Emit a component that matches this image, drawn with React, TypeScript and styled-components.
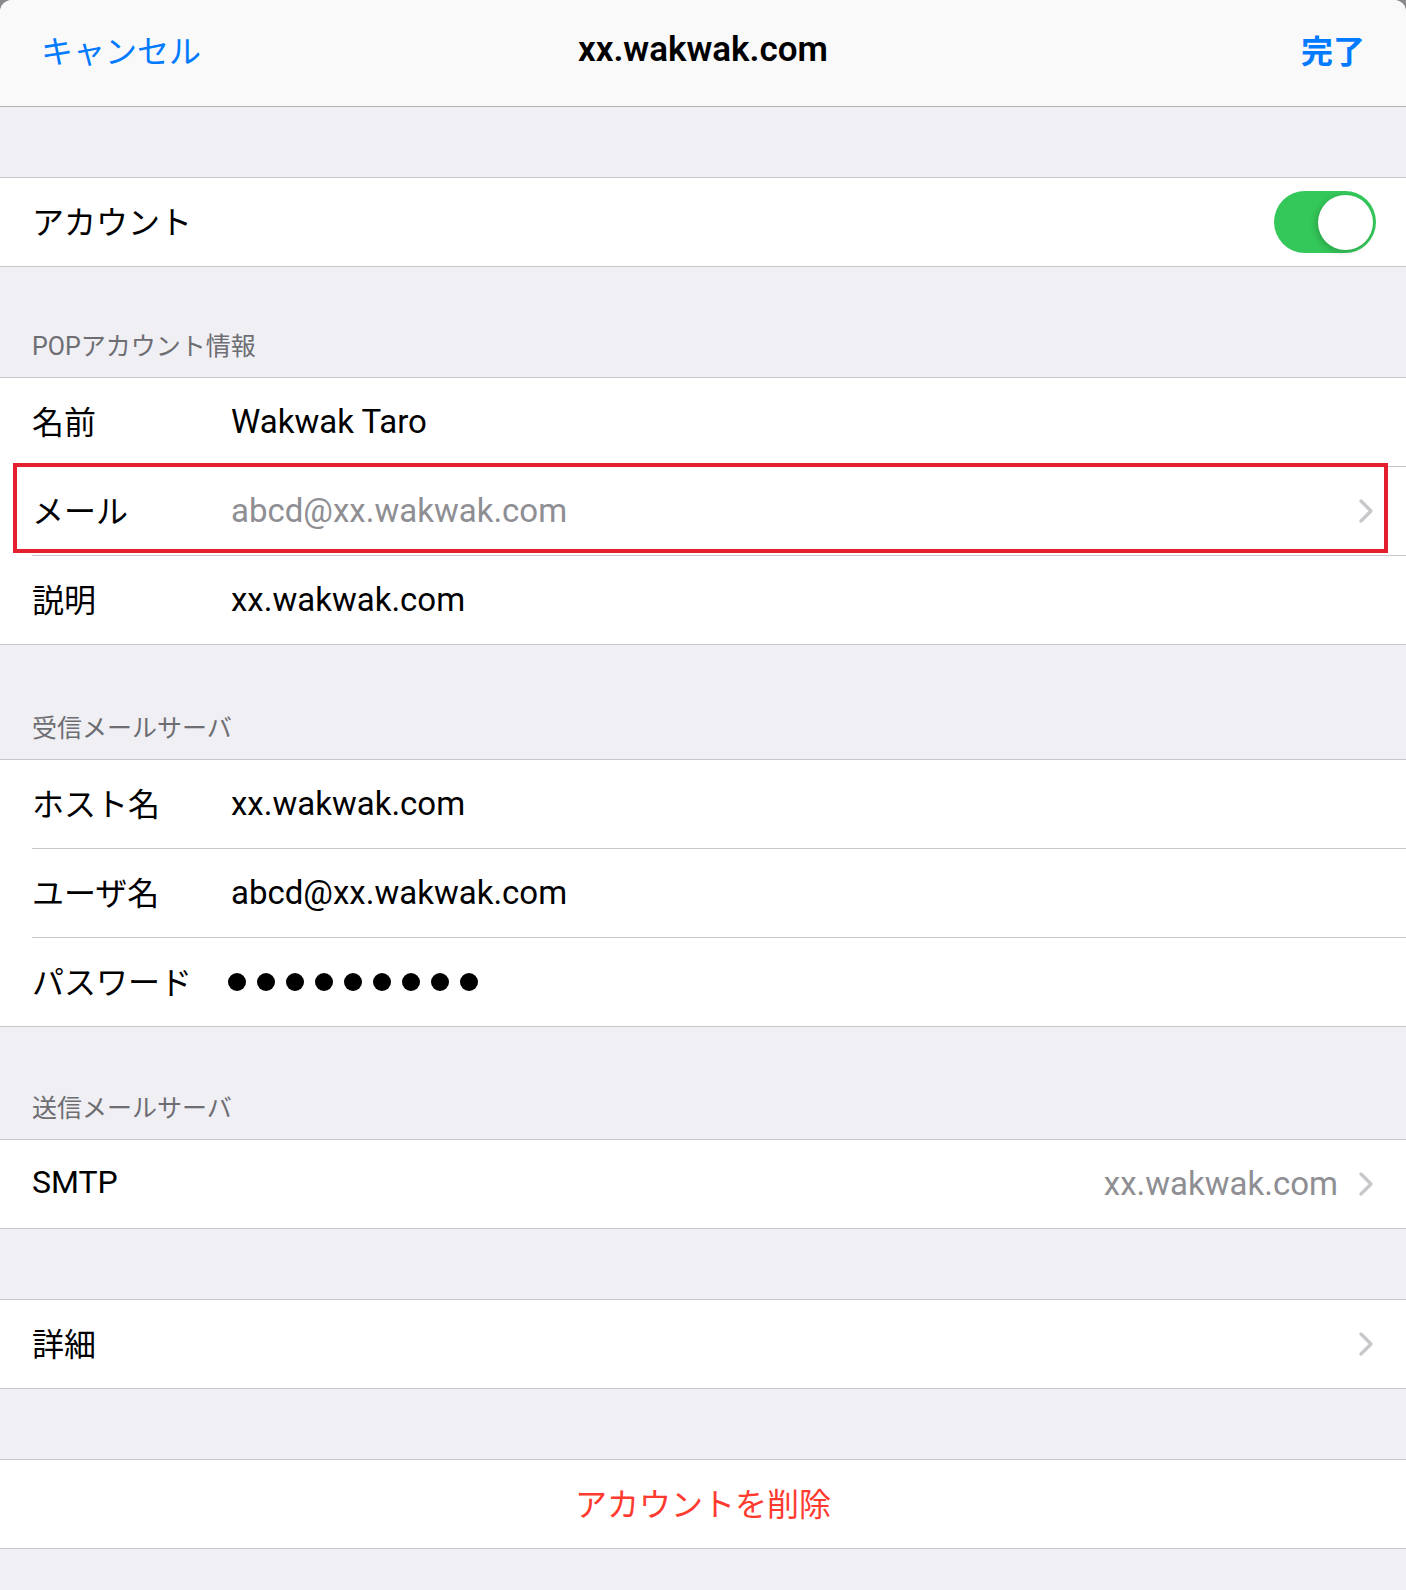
import styled, { createGlobalStyle } from 'styled-components';

const GlobalStyle = createGlobalStyle`
  html, body {
    margin: 0;
    padding: 0;
    background: #8a8a8e;
  }
  body {
    font-family: 'Roboto', 'Noto Sans CJK JP', sans-serif;
    -webkit-font-smoothing: antialiased;
  }
`;

type Field = {
  label: string;
  value?: string;
  muted?: boolean;
  chevron?: boolean;
  highlighted?: boolean;
  secret?: number;
};

const popFields: Field[] = [
  { label: '名前', value: 'Wakwak Taro' },
  { label: 'メール', value: 'abcd@xx.wakwak.com', muted: true, chevron: true, highlighted: true },
  { label: '説明', value: 'xx.wakwak.com' },
];

const incomingFields: Field[] = [
  { label: 'ホスト名', value: 'xx.wakwak.com' },
  { label: 'ユーザ名', value: 'abcd@xx.wakwak.com' },
  { label: 'パスワード', secret: 9 },
];

const Chevron = ({ inline }: { inline?: boolean }) => (
  <ChevronIcon $inline={inline} width="14" height="24" viewBox="0 0 14 24">
    <path d="M2 2 L12 12 L2 22" fill="none" stroke="#c7c7cc" strokeWidth="3.2" strokeLinecap="round" strokeLinejoin="round" />
  </ChevronIcon>
);

const FieldRow = ({ field }: { field: Field }) => (
  <Row>
    <Label>{field.label}</Label>
    {field.secret ? (
      <Dots>
        {Array.from({ length: field.secret }).map((_, i) => (
          <Dot key={i} />
        ))}
      </Dots>
    ) : (
      <Value $muted={field.muted}>{field.value}</Value>
    )}
    {field.chevron && <Chevron />}
    {field.highlighted && <Highlight />}
  </Row>
);

const App = () => {
  return (
    <>
      <GlobalStyle />
      <Sheet>
        <NavBar>
          <NavButton>キャンセル</NavButton>
          <NavTitle>xx.wakwak.com</NavTitle>
          <NavButton $bold $right>
            完了
          </NavButton>
        </NavBar>

        <Spacer />
        <Group>
          <Row>
            <Label>アカウント</Label>
            <Toggle>
              <Knob />
            </Toggle>
          </Row>
        </Group>

        <SectionHeader $height={110}>POPアカウント情報</SectionHeader>
        <Group>
          {popFields.map((f) => (
            <FieldRow key={f.label} field={f} />
          ))}
        </Group>

        <SectionHeader $height={114}>受信メールサーバ</SectionHeader>
        <Group>
          {incomingFields.map((f) => (
            <FieldRow key={f.label} field={f} />
          ))}
        </Group>

        <SectionHeader $height={112}>送信メールサーバ</SectionHeader>
        <Group>
          <Row>
            <Label>SMTP</Label>
            <TrailingValue>xx.wakwak.com</TrailingValue>
            <Chevron inline />
          </Row>
        </Group>

        <Spacer />
        <Group>
          <Row>
            <Label>詳細</Label>
            <Chevron />
          </Row>
        </Group>

        <Spacer />
        <Group>
          <Row $center>
            <DangerText>アカウントを削除</DangerText>
          </Row>
        </Group>
      </Sheet>
    </>
  );
};

const Sheet = styled.div`
  min-height: 100vh;
  background: #efeff4;
  border-radius: 12px 12px 0 0;
  overflow: hidden;
`;

const NavBar = styled.header`
  height: 107px;
  box-sizing: border-box;
  padding: 0 41px 8px;
  display: grid;
  grid-template-columns: 1fr auto 1fr;
  align-items: center;
  background: #f9f9f9;
  border-bottom: 1px solid #b2b2b2;
`;

const NavButton = styled.div<{ $bold?: boolean; $right?: boolean }>`
  font-size: 32px;
  color: #007aff;
  font-weight: ${(p) => (p.$bold ? 700 : 400)};
  text-align: ${(p) => (p.$right ? 'right' : 'left')};
`;

const NavTitle = styled.div`
  font-size: 35px;
  font-weight: 600;
  color: #000;
`;

const Spacer = styled.div`
  height: 70px;
`;

const SectionHeader = styled.div<{ $height: number }>`
  height: ${(p) => p.$height}px;
  box-sizing: border-box;
  display: flex;
  align-items: flex-end;
  padding: 0 32px 14px;
  font-size: 25px;
  line-height: 32px;
  color: #6d6d72;
`;

const Group = styled.section`
  background: #fff;
  border-top: 1px solid #c8c7cc;
  border-bottom: 1px solid #c8c7cc;
`;

const Row = styled.div<{ $center?: boolean }>`
  position: relative;
  height: 88px;
  display: flex;
  align-items: center;
  justify-content: ${(p) => (p.$center ? 'center' : 'flex-start')};
  padding: 0 ${(p) => (p.$center ? '0' : '30px')} 0 ${(p) => (p.$center ? '0' : '32px')};

  & + & {
    border-top: 1px solid transparent;
  }
  & + &::before {
    content: '';
    position: absolute;
    top: -1px;
    left: 32px;
    right: 0;
    height: 1px;
    background: #c8c7cc;
  }
`;

const Label = styled.div`
  width: 199px;
  flex-shrink: 0;
  margin-bottom: 4px;
  font-size: 32px;
  color: #000;
  white-space: nowrap;
`;

const Value = styled.div<{ $muted?: boolean }>`
  flex: 1;
  margin-bottom: 2px;
  font-size: 33px;
  color: ${(p) => (p.$muted ? '#8e8e93' : '#000')};
  white-space: nowrap;
`;

const TrailingValue = styled.div`
  margin-left: auto;
  margin-right: 21px;
  margin-bottom: 2px;
  font-size: 33px;
  color: #8e8e93;
`;

const ChevronIcon = styled.svg<{ $inline?: boolean }>`
  margin-left: ${(p) => (p.$inline ? '0' : 'auto')};
  flex-shrink: 0;
  margin-right: 3px;
`;

const Dots = styled.div`
  display: flex;
  gap: 11px;
  margin-left: -3px;
`;

const Dot = styled.span`
  width: 18px;
  height: 18px;
  border-radius: 50%;
  background: #000;
`;

const Highlight = styled.div`
  position: absolute;
  top: -4px;
  bottom: 2px;
  left: 13px;
  right: 18px;
  border: 4px solid #e5202e;
  pointer-events: none;
`;

const Toggle = styled.div`
  margin-left: auto;
  width: 102px;
  height: 62px;
  border-radius: 31px;
  background: #34c759;
  display: flex;
  align-items: center;
  justify-content: flex-end;
  padding-right: 3px;
  box-sizing: border-box;
`;

const Knob = styled.div`
  width: 55px;
  height: 55px;
  border-radius: 50%;
  background: #fff;
  box-shadow: -2px 2px 6px rgba(0, 0, 0, 0.18);
`;

const DangerText = styled.div`
  margin-bottom: 4px;
  font-size: 32px;
  color: #ff3b30;
`;

export default App;
